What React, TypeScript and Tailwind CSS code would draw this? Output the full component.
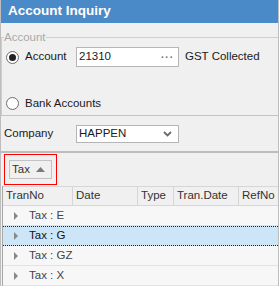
import { ReactNode } from "react";

const Radio = ({ checked = false, label }: { checked?: boolean; label: string }) => (
  <label className="flex items-center gap-[6px]">
    <span className="w-[13px] h-[13px] rounded-full border border-[#6d6d6d] bg-white flex items-center justify-center">
      {checked && <span className="w-[7px] h-[7px] rounded-full bg-[#222]" />}
    </span>
    <span>{label}</span>
  </label>
);

const Row = ({ label, selected = false }: { label: string; selected?: boolean }) => (
  <div
    className={`h-[20px] flex items-center pl-[10px] border-b ${
      selected
        ? "bg-[#cde6f7] border-y border-dotted border-[#222] text-[#111]"
        : "bg-[#f7f7f7] border-[#e2e2e2] text-[#444]"
    }`}
  >
    <svg width="6" height="8" viewBox="0 0 6 8" className="mr-[10px]">
      <path d="M1 0 L5 4 L1 8 Z" fill="#888" />
    </svg>
    {label}
  </div>
);

const HeaderCell = ({ w, children }: { w: string; children: ReactNode }) => (
  <div className={`${w} h-full flex items-center pl-[3px] border-r border-[#d6d6d6]`}>{children}</div>
);

export default function App() {
  return (
    <div
      className="w-[279px] h-[286px] overflow-hidden bg-[#f0f0f0] border-x border-[#bdbdbd] flex flex-col text-[11.5px] text-[#1a1a1a]"
      style={{ fontFamily: "'Liberation Sans', Arial, sans-serif" }}
    >
      <div className="h-[23px] shrink-0 bg-[#4a8ac8] text-white font-bold text-[13.5px] pl-[7px] flex items-center">
        Account Inquiry
      </div>

      <fieldset className="mt-[7px] border-t border-l border-[#cfcfcf] h-[86px] flex flex-col">
        <legend className="text-[#a9a9a9] ml-[2px] leading-[14px]">Account</legend>
        <div className="flex items-center h-[20px] mt-[3px] pl-[4px]">
          <div className="w-[70px]">
            <Radio checked label="Account" />
          </div>
          <div className="w-[103px] h-[20px] bg-white border border-[#b5b5b5] flex items-center justify-between pl-[2px] pr-[4px]">
            <span>21310</span>
            <span className="text-[#707070] tracking-[1px] text-[10px] font-bold">···</span>
          </div>
          <span className="ml-[6px]">GST Collected</span>
        </div>
        <div className="pl-[4px] mt-[28px]">
          <Radio label="Bank Accounts" />
        </div>
      </fieldset>

      <div className="h-[36px] shrink-0 border-t border-[#c4c4c4] flex items-center pl-[3px]">
        <span className="w-[72px]">Company</span>
        <div className="w-[103px] h-[18px] bg-white border border-[#b5b5b5] flex items-center justify-between pl-[2px] pr-[6px]">
          <span>HAPPEN</span>
          <svg width="9" height="6" viewBox="0 0 9 6">
            <path d="M1 1 L4.5 4.5 L8 1" stroke="#6b6b6b" strokeWidth="1.8" fill="none" />
          </svg>
        </div>
      </div>

      <div className="h-[35px] shrink-0 border-t-2 border-[#bcbcbc] flex items-center pl-[3px]">
        <div className="w-[53px] h-[31px] border border-[#ff0000] flex items-center justify-center">
          <div className="w-[43px] h-[19px] border border-[#c2c2c2] flex items-center pl-[2px] gap-[6px] text-[#333]">
            Tax
            <svg width="9" height="5" viewBox="0 0 9 5">
              <path d="M0 5 L4.5 0 L9 5 Z" fill="#7a7a7a" />
            </svg>
          </div>
        </div>
      </div>

      <div className="flex-1 flex flex-col border-l border-[#a8a8a8] ml-[1px]">
        <div className="h-[20px] shrink-0 flex border-t border-b border-[#d6d6d6] text-[#333]">
          <HeaderCell w="w-[70px]">TranNo</HeaderCell>
          <HeaderCell w="w-[65px]">Date</HeaderCell>
          <HeaderCell w="w-[36px]">Type</HeaderCell>
          <HeaderCell w="w-[65px]">Tran.Date</HeaderCell>
          <div className="flex-1 h-full flex items-center pl-[3px]">RefNo</div>
        </div>
        <div className="flex-1 bg-[#f7f7f7]">
          <Row label="Tax : E" />
          <Row label="Tax : G" selected />
          <Row label="Tax : GZ" />
          <Row label="Tax : X" />
        </div>
      </div>
    </div>
  );
}
